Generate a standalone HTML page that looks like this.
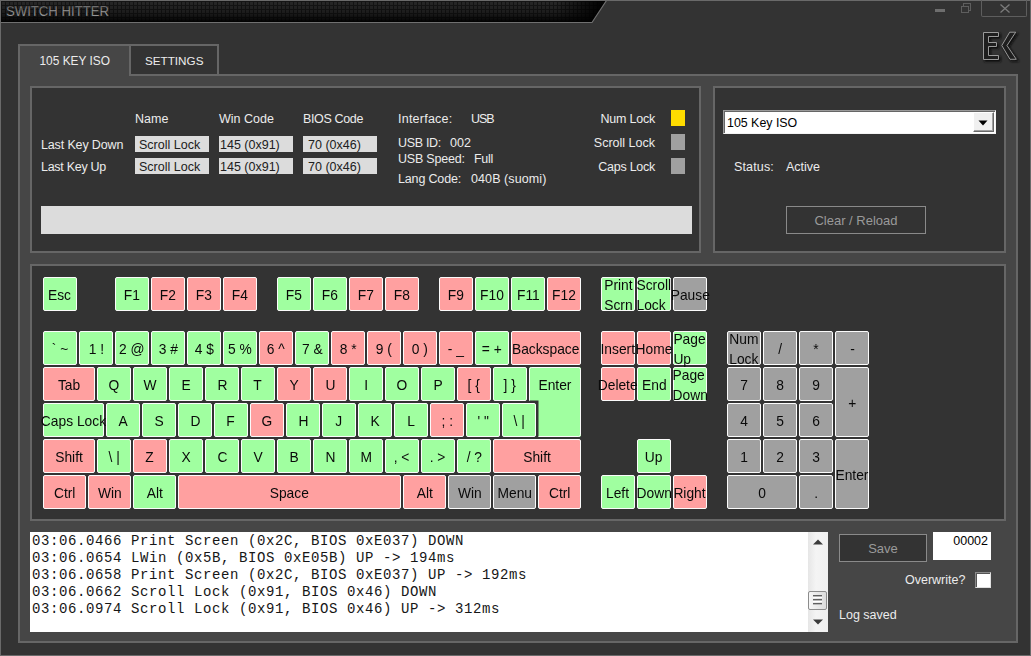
<!DOCTYPE html>
<html><head><meta charset="utf-8"><title>Switch Hitter</title>
<style>
*{box-sizing:border-box;margin:0;padding:0}
html,body{width:1031px;height:656px;overflow:hidden;background:#333}
body{position:relative;font-family:"Liberation Sans",sans-serif;font-size:12px;color:#ececec}
.abs{position:absolute}
#win{position:absolute;left:0;top:0;width:1031px;height:656px;border:1px solid #6a6a6a;background:#333}
.panel{position:absolute;background:#464646;border:2px solid #666}
.box{position:absolute;background:#333;border:2px solid #666}
.t{position:absolute;white-space:nowrap;line-height:14px;font-size:12.5px}
.tb{position:absolute;background:#dcdcdc;color:#202020;height:16px;line-height:16px;padding-top:1px;font-size:12.5px;white-space:nowrap;overflow:hidden}
.k{position:absolute;border:1px solid #fbfbfb;border-radius:2px;display:flex;align-items:center;justify-content:center;color:#0a0a0a;font-size:15px;line-height:20px;white-space:nowrap}
.k span{display:block;text-align:left;flex:none;position:relative;z-index:2;top:0.5px;transform:scaleX(0.92)}
.mono{font-family:"Liberation Mono",monospace}
</style></head><body>
<div id="win"></div>

<!-- title bar -->
<svg class="abs" style="left:0;top:0" width="620" height="24" viewBox="0 0 620 24">
<defs>
<pattern id="grid" width="4" height="4" patternUnits="userSpaceOnUse" x="1" y="1">
<rect width="4" height="4" fill="#161616"/><rect x="1" y="1" width="3" height="3" fill="#292929"/>
</pattern>
<linearGradient id="fade" x1="0" y1="0" x2="0" y2="1">
<stop offset="0" stop-color="#000" stop-opacity="0.05"/><stop offset="0.6" stop-color="#000" stop-opacity="0.35"/><stop offset="1" stop-color="#000" stop-opacity="0.95"/>
</linearGradient>
<linearGradient id="fadeR" gradientUnits="userSpaceOnUse" x1="555" y1="0" x2="600" y2="0">
<stop offset="0" stop-color="#000" stop-opacity="0"/><stop offset="1" stop-color="#000" stop-opacity="0.9"/>
</linearGradient>
<linearGradient id="tg" x1="0" y1="0" x2="0" y2="1">
<stop offset="0" stop-color="#777"/><stop offset="1" stop-color="#d2d2d2"/>
</linearGradient>
</defs>
<polygon points="1,1 606,1 592,22 1,22" fill="url(#grid)"/>
<polygon points="1,1 606,1 592,22 1,22" fill="url(#fade)"/>
<polygon points="1,1 606,1 592,22 1,22" fill="url(#fadeR)"/>
<polyline points="0,22.5 592,22.5 606.5,0.5" fill="none" stroke="#707070" stroke-width="1.2"/>
<line x1="0" y1="0.5" x2="620" y2="0.5" stroke="#6a6a6a"/>
<line x1="0.5" y1="0" x2="0.5" y2="24" stroke="#6a6a6a"/>
<text x="6" y="16" font-family="Liberation Sans, sans-serif" font-size="14" fill="url(#tg)" stroke="#1a1a1a" stroke-width="0.35" paint-order="fill stroke" style="paint-order:fill stroke" textLength="103" lengthAdjust="spacingAndGlyphs">SWITCH HITTER</text>
</svg>

<!-- window controls -->
<div class="abs" style="left:935px;top:9px;width:10px;height:3px;background:#6e6e6e"></div>
<div class="abs" style="left:963px;top:3px;width:8px;height:7.5px;border:1px solid #5e5e5e"></div>
<div class="abs" style="left:961px;top:5.5px;width:8px;height:7.5px;border:1px solid #5e5e5e;background:#333"></div>
<div class="abs" style="left:981px;top:0px;width:46px;height:17px;border:1px solid #5e5e5e;border-top:none;border-radius:0 0 2px 2px"></div>
<svg class="abs" style="left:999px;top:2.8px" width="12" height="11" viewBox="0 0 12 11"><path d="M1.5 1.5 L10.5 9.5 M10.5 1.5 L1.5 9.5" stroke="#7c7c7c" stroke-width="1.3" fill="none"/></svg>

<!-- logo -->
<svg class="abs" style="left:976px;top:26px" width="48" height="40" viewBox="976 26 48 40">
<defs><filter id="sh" x="-20%" y="-20%" width="150%" height="150%"><feGaussianBlur stdDeviation="0.9"/></filter></defs>
<g transform="translate(1.6,1.6)" filter="url(#sh)" fill="#121212" stroke="#121212" stroke-width="1.6">
<path d="M983.5 32.5 H998.5 V36.5 H988.5 V42.5 H996.5 V46.5 H988.5 V55.5 H998.5 V59.5 H983.5 Z"/>
<path d="M1001.8 45.5 L1009.7 32.2 H1015.7 L1007 45.5 L1016.3 59.3 H1010 Z"/>
</g>
<g fill="#1f1f1f" stroke="#9a9a9a" stroke-width="1">
<path d="M983.5 32.5 H998.5 V36.5 H988.5 V42.5 H996.5 V46.5 H988.5 V55.5 H998.5 V59.5 H983.5 Z"/>
<path d="M1001.8 45.5 L1009.7 32.2 H1015.7 L1007 45.5 L1016.3 59.3 H1010 Z"/>
</g>
</svg>

<!-- tab panel -->
<div class="panel" style="left:18px;top:74px;width:1000px;height:569px"></div>
<div class="abs" style="left:18px;top:44px;width:113px;height:32px;background:#464646;border:2px solid #666;border-bottom:none"></div>
<div class="abs" style="left:129px;top:44px;width:90px;height:32px;background:#333;border:2px solid #666"></div>
<div class="t" style="left:39.5px;top:54px;font-size:11.9px">105 KEY ISO</div>
<div class="t" style="left:145px;top:54px;font-size:11.7px">SETTINGS</div>

<!-- info box -->
<div class="box" style="left:30px;top:86px;width:671px;height:167px"></div>
<div class="t" style="left:135px;top:112px">Name</div>
<div class="t" style="left:219px;top:112px">Win Code</div>
<div class="t" style="left:303px;top:112px;letter-spacing:-0.36px">BIOS Code</div>
<div class="t" style="left:41px;top:138px;letter-spacing:-0.14px">Last Key Down</div>
<div class="t" style="left:41px;top:160px;letter-spacing:-0.28px">Last Key Up</div>
<div class="tb" style="left:135px;top:136px;width:74px;padding-left:4px">Scroll Lock</div>
<div class="tb" style="left:219px;top:136px;width:74px;padding-left:1px">145 (0x91)</div>
<div class="tb" style="left:303px;top:136px;width:74px;padding-left:5px">70 (0x46)</div>
<div class="tb" style="left:135px;top:158px;width:74px;padding-left:4px">Scroll Lock</div>
<div class="tb" style="left:219px;top:158px;width:74px;padding-left:1px">145 (0x91)</div>
<div class="tb" style="left:303px;top:158px;width:74px;padding-left:5px">70 (0x46)</div>
<div class="t" style="left:398px;top:112px;letter-spacing:0.24px">Interface:</div>
<div class="t" style="left:471px;top:112px;letter-spacing:-1px">USB</div>
<div class="t" style="left:398px;top:136px;letter-spacing:-0.31px">USB ID:</div>
<div class="t" style="left:450px;top:136px">002</div>
<div class="t" style="left:398px;top:152px;letter-spacing:-0.21px">USB Speed:</div>
<div class="t" style="left:474px;top:152px;letter-spacing:-0.30px">Full</div>
<div class="t" style="left:398px;top:172px;letter-spacing:-0.16px">Lang Code:</div>
<div class="t" style="left:471px;top:172px;letter-spacing:0.09px">040B (suomi)</div>
<div class="t" style="right:376px;top:112px;letter-spacing:-0.21px">Num Lock</div>
<div class="t" style="right:376px;top:136px">Scroll Lock</div>
<div class="t" style="right:376px;top:160px;letter-spacing:-0.27px">Caps Lock</div>
<div class="abs" style="left:671px;top:110px;width:14px;height:16px;background:#ffdc00"></div>
<div class="abs" style="left:671px;top:134px;width:14px;height:16px;background:#a0a0a0"></div>
<div class="abs" style="left:671px;top:158px;width:14px;height:16px;background:#a0a0a0"></div>
<div class="abs" style="left:41px;top:206px;width:651px;height:28px;background:#dcdcdc"></div>

<!-- status box -->
<div class="box" style="left:713px;top:86px;width:293px;height:167px"></div>
<div class="abs" style="left:723px;top:110px;width:273px;height:24px;background:#fff;border:1px solid #9a9a9a;border-right-color:#f4f4f4;border-bottom-color:#f4f4f4;box-shadow:inset 1px 1px 0 #666"></div>
<div class="abs" style="left:973px;top:112px;width:21px;height:20px;background:#f0f0f0;border:1px solid #fff;border-right-color:#696969;border-bottom-color:#696969;box-shadow:inset -1px -1px 0 #a0a0a0"></div>
<svg class="abs" style="left:977.7px;top:119.6px" width="10" height="6" viewBox="0 0 10 6"><path d="M0.5 0.5 H9.5 L5 5.5 Z" fill="#000"/></svg>
<div class="t" style="left:727px;top:116px;color:#000;font-size:12.4px">105 Key ISO</div>
<div class="t" style="left:734px;top:160px;letter-spacing:0.14px">Status:</div>
<div class="t" style="left:786px;top:160px">Active</div>
<div class="abs" style="left:786px;top:206px;width:140px;height:28px;border:1px solid #8a8a8a;background:#333"></div>
<div class="t" style="left:786px;top:214px;width:140px;text-align:center;color:#9a9a9a;font-size:13px">Clear / Reload</div>

<!-- keyboard box -->
<div class="box" style="left:30px;top:264px;width:976px;height:257px"></div>
<svg class="abs" style="left:527px;top:365px" width="56" height="74" viewBox="527 365 56 74">
<path d="M531 367 H579 Q581 367 581 369 V435 Q581 437 579 437 H538.5 V400.6 H529 V369 Q529 367 531 367 Z" fill="#a0ffa0"/>
<path d="M529.5 400.6 V369.5 Q529.5 367.5 531.5 367.5 H578.5 Q580.5 367.5 580.5 369.5 V434.5 Q580.5 436.5 578.5 436.5 H538.5" fill="none" stroke="#fbfbfb" stroke-width="1"/>
</svg>
<div class="k" style="left:529px;top:367px;width:52px;height:34px;border:none;background:none"><span>Enter</span></div>
<div class="k " style="left:43px;top:277px;width:34px;height:34px;background:#a0ffa0"><span>Esc</span></div>
<div class="k " style="left:115px;top:277px;width:34px;height:34px;background:#a0ffa0"><span>F1</span></div>
<div class="k " style="left:151px;top:277px;width:34px;height:34px;background:#ffa0a0"><span>F2</span></div>
<div class="k " style="left:187px;top:277px;width:34px;height:34px;background:#ffa0a0"><span>F3</span></div>
<div class="k " style="left:223px;top:277px;width:34px;height:34px;background:#ffa0a0"><span>F4</span></div>
<div class="k " style="left:277px;top:277px;width:34px;height:34px;background:#a0ffa0"><span>F5</span></div>
<div class="k " style="left:313px;top:277px;width:34px;height:34px;background:#a0ffa0"><span>F6</span></div>
<div class="k " style="left:349px;top:277px;width:34px;height:34px;background:#ffa0a0"><span>F7</span></div>
<div class="k " style="left:385px;top:277px;width:34px;height:34px;background:#ffa0a0"><span>F8</span></div>
<div class="k " style="left:439px;top:277px;width:34px;height:34px;background:#ffa0a0"><span>F9</span></div>
<div class="k " style="left:475px;top:277px;width:34px;height:34px;background:#a0ffa0"><span>F10</span></div>
<div class="k " style="left:511px;top:277px;width:34px;height:34px;background:#a0ffa0"><span>F11</span></div>
<div class="k " style="left:547px;top:277px;width:34px;height:34px;background:#ffa0a0"><span>F12</span></div>
<div class="k ml" style="left:601px;top:277px;width:34px;height:34px;background:#a0ffa0"><span>Print<br>Scrn</span></div>
<div class="k ml" style="left:637px;top:277px;width:34px;height:34px;background:#a0ffa0"><span>Scroll<br>Lock</span></div>
<div class="k " style="left:673px;top:277px;width:34px;height:34px;background:#a0a0a0"><span>Pause</span></div>
<div class="k " style="left:43px;top:331px;width:34px;height:34px;background:#a0ffa0"><span>` ~</span></div>
<div class="k " style="left:79px;top:331px;width:34px;height:34px;background:#a0ffa0"><span>1 !</span></div>
<div class="k " style="left:115px;top:331px;width:34px;height:34px;background:#a0ffa0"><span>2 @</span></div>
<div class="k " style="left:151px;top:331px;width:34px;height:34px;background:#a0ffa0"><span>3 #</span></div>
<div class="k " style="left:187px;top:331px;width:34px;height:34px;background:#a0ffa0"><span>4 $</span></div>
<div class="k " style="left:223px;top:331px;width:34px;height:34px;background:#a0ffa0"><span>5 %</span></div>
<div class="k " style="left:259px;top:331px;width:34px;height:34px;background:#ffa0a0"><span>6 ^</span></div>
<div class="k " style="left:295px;top:331px;width:34px;height:34px;background:#a0ffa0"><span>7 &amp;</span></div>
<div class="k " style="left:331px;top:331px;width:34px;height:34px;background:#ffa0a0"><span>8 *</span></div>
<div class="k " style="left:367px;top:331px;width:34px;height:34px;background:#ffa0a0"><span>9 (</span></div>
<div class="k " style="left:403px;top:331px;width:34px;height:34px;background:#ffa0a0"><span>0 )</span></div>
<div class="k " style="left:439px;top:331px;width:34px;height:34px;background:#ffa0a0"><span>- _</span></div>
<div class="k " style="left:475px;top:331px;width:34px;height:34px;background:#a0ffa0"><span>= +</span></div>
<div class="k " style="left:511px;top:331px;width:70px;height:34px;background:#ffa0a0"><span>Backspace</span></div>
<div class="k " style="left:601px;top:331px;width:34px;height:34px;background:#ffa0a0"><span>Insert</span></div>
<div class="k " style="left:637px;top:331px;width:34px;height:34px;background:#ffa0a0"><span>Home</span></div>
<div class="k ml" style="left:673px;top:331px;width:34px;height:34px;background:#a0ffa0"><span>Page<br>Up</span></div>
<div class="k ml" style="left:727px;top:331px;width:34px;height:34px;background:#a0a0a0"><span>Num<br>Lock</span></div>
<div class="k " style="left:763px;top:331px;width:34px;height:34px;background:#a0a0a0"><span>/</span></div>
<div class="k " style="left:799px;top:331px;width:34px;height:34px;background:#a0a0a0"><span>*</span></div>
<div class="k " style="left:835px;top:331px;width:34px;height:34px;background:#a0a0a0"><span>-</span></div>
<div class="k " style="left:43px;top:367px;width:52px;height:34px;background:#ffa0a0"><span>Tab</span></div>
<div class="k " style="left:97px;top:367px;width:34px;height:34px;background:#a0ffa0"><span>Q</span></div>
<div class="k " style="left:133px;top:367px;width:34px;height:34px;background:#a0ffa0"><span>W</span></div>
<div class="k " style="left:169px;top:367px;width:34px;height:34px;background:#a0ffa0"><span>E</span></div>
<div class="k " style="left:205px;top:367px;width:34px;height:34px;background:#a0ffa0"><span>R</span></div>
<div class="k " style="left:241px;top:367px;width:34px;height:34px;background:#a0ffa0"><span>T</span></div>
<div class="k " style="left:277px;top:367px;width:34px;height:34px;background:#ffa0a0"><span>Y</span></div>
<div class="k " style="left:313px;top:367px;width:34px;height:34px;background:#ffa0a0"><span>U</span></div>
<div class="k " style="left:349px;top:367px;width:34px;height:34px;background:#a0ffa0"><span>I</span></div>
<div class="k " style="left:385px;top:367px;width:34px;height:34px;background:#a0ffa0"><span>O</span></div>
<div class="k " style="left:421px;top:367px;width:34px;height:34px;background:#a0ffa0"><span>P</span></div>
<div class="k " style="left:457px;top:367px;width:34px;height:34px;background:#ffa0a0"><span>[ {</span></div>
<div class="k " style="left:493px;top:367px;width:34px;height:34px;background:#a0ffa0"><span>] }</span></div>
<div class="k " style="left:601px;top:367px;width:34px;height:34px;background:#ffa0a0"><span>Delete</span></div>
<div class="k " style="left:637px;top:367px;width:34px;height:34px;background:#a0ffa0"><span>End</span></div>
<div class="k ml" style="left:673px;top:367px;width:34px;height:34px;background:#a0ffa0"><span>Page<br>Down</span></div>
<div class="k " style="left:727px;top:367px;width:34px;height:34px;background:#a0a0a0"><span>7</span></div>
<div class="k " style="left:763px;top:367px;width:34px;height:34px;background:#a0a0a0"><span>8</span></div>
<div class="k " style="left:799px;top:367px;width:34px;height:34px;background:#a0a0a0"><span>9</span></div>
<div class="k " style="left:835px;top:367px;width:34px;height:70px;background:#a0a0a0"><span>+</span></div>
<div class="k " style="left:43px;top:403px;width:61px;height:34px;background:#a0ffa0"><span>Caps Lock</span></div>
<div class="k " style="left:106px;top:403px;width:34px;height:34px;background:#a0ffa0"><span>A</span></div>
<div class="k " style="left:142px;top:403px;width:34px;height:34px;background:#a0ffa0"><span>S</span></div>
<div class="k " style="left:178px;top:403px;width:34px;height:34px;background:#a0ffa0"><span>D</span></div>
<div class="k " style="left:214px;top:403px;width:34px;height:34px;background:#a0ffa0"><span>F</span></div>
<div class="k " style="left:250px;top:403px;width:34px;height:34px;background:#ffa0a0"><span>G</span></div>
<div class="k " style="left:286px;top:403px;width:34px;height:34px;background:#a0ffa0"><span>H</span></div>
<div class="k " style="left:322px;top:403px;width:34px;height:34px;background:#a0ffa0"><span>J</span></div>
<div class="k " style="left:358px;top:403px;width:34px;height:34px;background:#a0ffa0"><span>K</span></div>
<div class="k " style="left:394px;top:403px;width:34px;height:34px;background:#a0ffa0"><span>L</span></div>
<div class="k " style="left:430px;top:403px;width:34px;height:34px;background:#ffa0a0"><span>; :</span></div>
<div class="k " style="left:466px;top:403px;width:34px;height:34px;background:#a0ffa0"><span>' &quot;</span></div>
<div class="k " style="left:502px;top:403px;width:34px;height:34px;background:#a0ffa0"><span>\ |</span></div>
<div class="k " style="left:727px;top:403px;width:34px;height:34px;background:#a0a0a0"><span>4</span></div>
<div class="k " style="left:763px;top:403px;width:34px;height:34px;background:#a0a0a0"><span>5</span></div>
<div class="k " style="left:799px;top:403px;width:34px;height:34px;background:#a0a0a0"><span>6</span></div>
<div class="k " style="left:43px;top:439px;width:52px;height:34px;background:#ffa0a0"><span>Shift</span></div>
<div class="k " style="left:97px;top:439px;width:34px;height:34px;background:#a0ffa0"><span>\ |</span></div>
<div class="k " style="left:133px;top:439px;width:34px;height:34px;background:#ffa0a0"><span>Z</span></div>
<div class="k " style="left:169px;top:439px;width:34px;height:34px;background:#a0ffa0"><span>X</span></div>
<div class="k " style="left:205px;top:439px;width:34px;height:34px;background:#a0ffa0"><span>C</span></div>
<div class="k " style="left:241px;top:439px;width:34px;height:34px;background:#a0ffa0"><span>V</span></div>
<div class="k " style="left:277px;top:439px;width:34px;height:34px;background:#a0ffa0"><span>B</span></div>
<div class="k " style="left:313px;top:439px;width:34px;height:34px;background:#a0ffa0"><span>N</span></div>
<div class="k " style="left:349px;top:439px;width:34px;height:34px;background:#a0ffa0"><span>M</span></div>
<div class="k " style="left:385px;top:439px;width:34px;height:34px;background:#a0ffa0"><span>, &lt;</span></div>
<div class="k " style="left:421px;top:439px;width:34px;height:34px;background:#a0ffa0"><span>. &gt;</span></div>
<div class="k " style="left:457px;top:439px;width:34px;height:34px;background:#a0ffa0"><span>/ ?</span></div>
<div class="k " style="left:493px;top:439px;width:88px;height:34px;background:#ffa0a0"><span>Shift</span></div>
<div class="k " style="left:637px;top:439px;width:34px;height:34px;background:#a0ffa0"><span>Up</span></div>
<div class="k " style="left:727px;top:439px;width:34px;height:34px;background:#a0a0a0"><span>1</span></div>
<div class="k " style="left:763px;top:439px;width:34px;height:34px;background:#a0a0a0"><span>2</span></div>
<div class="k " style="left:799px;top:439px;width:34px;height:34px;background:#a0a0a0"><span>3</span></div>
<div class="k " style="left:835px;top:439px;width:34px;height:70px;background:#a0a0a0"><span>Enter</span></div>
<div class="k " style="left:43px;top:475px;width:43px;height:34px;background:#ffa0a0"><span>Ctrl</span></div>
<div class="k " style="left:88px;top:475px;width:43px;height:34px;background:#ffa0a0"><span>Win</span></div>
<div class="k " style="left:133px;top:475px;width:43px;height:34px;background:#a0ffa0"><span>Alt</span></div>
<div class="k " style="left:178px;top:475px;width:223px;height:34px;background:#ffa0a0"><span>Space</span></div>
<div class="k " style="left:403px;top:475px;width:43px;height:34px;background:#ffa0a0"><span>Alt</span></div>
<div class="k " style="left:448px;top:475px;width:43px;height:34px;background:#a0a0a0"><span>Win</span></div>
<div class="k " style="left:493px;top:475px;width:43px;height:34px;background:#a0a0a0"><span>Menu</span></div>
<div class="k " style="left:538px;top:475px;width:43px;height:34px;background:#ffa0a0"><span>Ctrl</span></div>
<div class="k " style="left:601px;top:475px;width:34px;height:34px;background:#a0ffa0"><span>Left</span></div>
<div class="k " style="left:637px;top:475px;width:34px;height:34px;background:#a0ffa0"><span>Down</span></div>
<div class="k " style="left:673px;top:475px;width:34px;height:34px;background:#ffa0a0"><span>Right</span></div>
<div class="k " style="left:727px;top:475px;width:70px;height:34px;background:#a0a0a0"><span>0</span></div>
<div class="k " style="left:799px;top:475px;width:34px;height:34px;background:#a0a0a0"><span>.</span></div>


<!-- log -->
<div class="abs mono" style="left:30px;top:532px;width:798px;height:100px;background:#fff;color:#161616;font-size:14px;letter-spacing:0.6px;line-height:17px;padding:1px 0 0 2px;white-space:pre;overflow:hidden">03:06.0466 Print Screen (0x2C, BIOS 0xE037) DOWN
03:06.0654 LWin (0x5B, BIOS 0xE05B) UP -&gt; 194ms
03:06.0658 Print Screen (0x2C, BIOS 0xE037) UP -&gt; 192ms
03:06.0662 Scroll Lock (0x91, BIOS 0x46) DOWN
03:06.0974 Scroll Lock (0x91, BIOS 0x46) UP -&gt; 312ms</div>
<div class="abs" style="left:808px;top:532px;width:20px;height:100px;background:linear-gradient(to right,#e6e6e6,#f4f4f4 40%,#f0f0f0)"></div>
<svg class="abs" style="left:813px;top:539px" width="10" height="6" viewBox="0 0 10 6"><path d="M0 5.5 L5 0.5 L10 5.5 Z" fill="#3c3c3c"/></svg>
<svg class="abs" style="left:813px;top:618.5px" width="10" height="6" viewBox="0 0 10 6"><path d="M0 0.5 L5 5.5 L10 0.5 Z" fill="#3c3c3c"/></svg>
<div class="abs" style="left:808px;top:591px;width:19px;height:19px;border:1px solid #8c8c8c;border-radius:2px;background:linear-gradient(to right,#f6f6f6,#dcdcdc)"></div>
<div class="abs" style="left:813px;top:595px;width:9px;height:1px;background:#606060;box-shadow:0 4px 0 #606060,0 8px 0 #606060,0 1px 0 #b8b8b8,0 5px 0 #b8b8b8,0 9px 0 #b8b8b8,0 2px 0 #fff,0 6px 0 #fff"></div>

<div class="abs" style="left:839px;top:534px;width:88px;height:28px;border:1px solid #8a8a8a;background:#333"></div>
<div class="t" style="left:839px;top:542px;width:88px;text-align:center;color:#9a9a9a;font-size:13px">Save</div>
<div class="abs" style="left:933px;top:532px;width:58px;height:28px;background:#fff"></div>
<div class="t" style="left:933px;top:534px;width:55px;text-align:right;color:#000">00002</div>
<div class="t" style="left:905px;top:573px">Overwrite?</div>
<div class="abs" style="left:975px;top:572px;width:16px;height:16px;background:#fff;border:1px solid #8a8a8a;border-right-color:#e0e0e0;border-bottom-color:#e0e0e0;box-shadow:inset 1px 1px 0 #555"></div>
<div class="t" style="left:839px;top:608px">Log saved</div>
</body></html>
